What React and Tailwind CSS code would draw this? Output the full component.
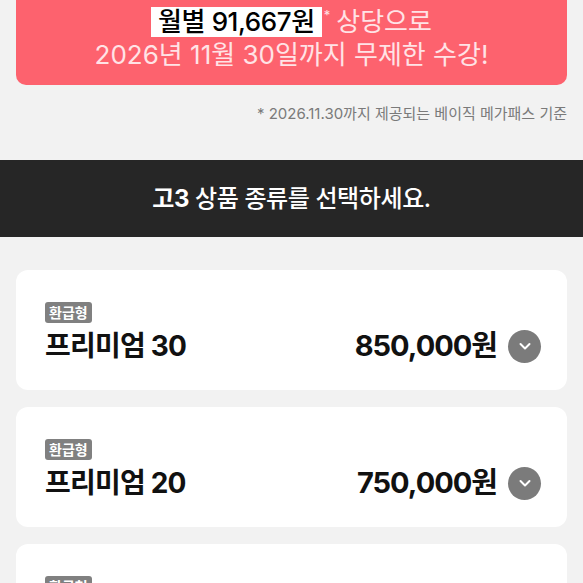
import React from 'react';

const plans = [
  { tag: '환급형', name: '프리미엄 30', price: '850,000원' },
  { tag: '환급형', name: '프리미엄 20', price: '750,000원' },
  { tag: '환급형', name: '프리미엄 10', price: '650,000원' },
];

const ChevronCircle = () => (
  <div className="w-[33px] h-[33px] rounded-full bg-[#7b7b7b] flex items-center justify-center shrink-0">
    <svg width="16" height="16" viewBox="0 0 16 16" fill="none">
      <path d="M3.5 6 L8 10.5 L12.5 6" stroke="white" strokeWidth="2" strokeLinecap="round" strokeLinejoin="round" />
    </svg>
  </div>
);

export default function App() {
  return (
    <div
      className="w-[583px] h-[583px] overflow-hidden bg-[#f2f2f2]"
      style={{ fontFamily: 'Inter, "Noto Sans CJK KR", sans-serif' }}
    >
      {/* promo box */}
      <div className="mx-4 h-[85px] rounded-b-[10px] bg-[#fd626e] flex flex-col items-center pt-[7px]">
        <div className="flex items-start h-[31px]">
          <span className="bg-white text-black text-[26px] leading-[30px] font-medium px-[7px] tracking-[-0.4px]">
            월별 91,667원
          </span>
          <span className="text-[#ffe3e6] text-[13px] leading-none ml-[2px] mt-[2px]">*</span>
          <span className="text-[#ffe3e6] text-[26px] leading-[30px] ml-[6px]">상당으로</span>
        </div>
        <p className="text-[#ffe3e6] text-[26px] leading-[34px]">
          2026년 11월 30일까지 무제한 수강!
        </p>
      </div>

      {/* footnote */}
      <p className="text-right pr-4 mt-[19px] text-[15px] leading-[20px] text-[#7a7a7a]">
        * 2026.11.30까지 제공되는 베이직 메가패스 기준
      </p>

      {/* section header */}
      <div className="mt-[36px] h-[77px] bg-[#262626] flex items-center justify-center">
        <h2 className="text-white text-[24px] font-medium tracking-[-0.4px]">
          <span className="font-bold">고3</span> 상품 종류를 선택하세요.
        </h2>
      </div>

      {/* plan cards */}
      <div className="mt-[33px] mx-4 flex flex-col gap-[17px]">
        {plans.map((p) => (
          <div key={p.name} className="bg-white rounded-[12px] h-[120px] px-[29px] pt-[30px]">
            <span className="inline-block bg-[#808080] text-white text-[14px] leading-[21px] font-bold px-[4px] rounded-[3px]">
              {p.tag}
            </span>
            <div className="flex items-center justify-between mt-[4px]">
              <span className="text-[#111] text-[28px] leading-[36px] font-bold tracking-[-0.8px]">{p.name}</span>
              <div className="flex items-center gap-[11px] -mr-[3px]">
                <span className="text-[#111] text-[29px] leading-[36px] font-bold tracking-[-1px]">{p.price}</span>
                <ChevronCircle />
              </div>
            </div>
          </div>
        ))}
      </div>
    </div>
  );
}
